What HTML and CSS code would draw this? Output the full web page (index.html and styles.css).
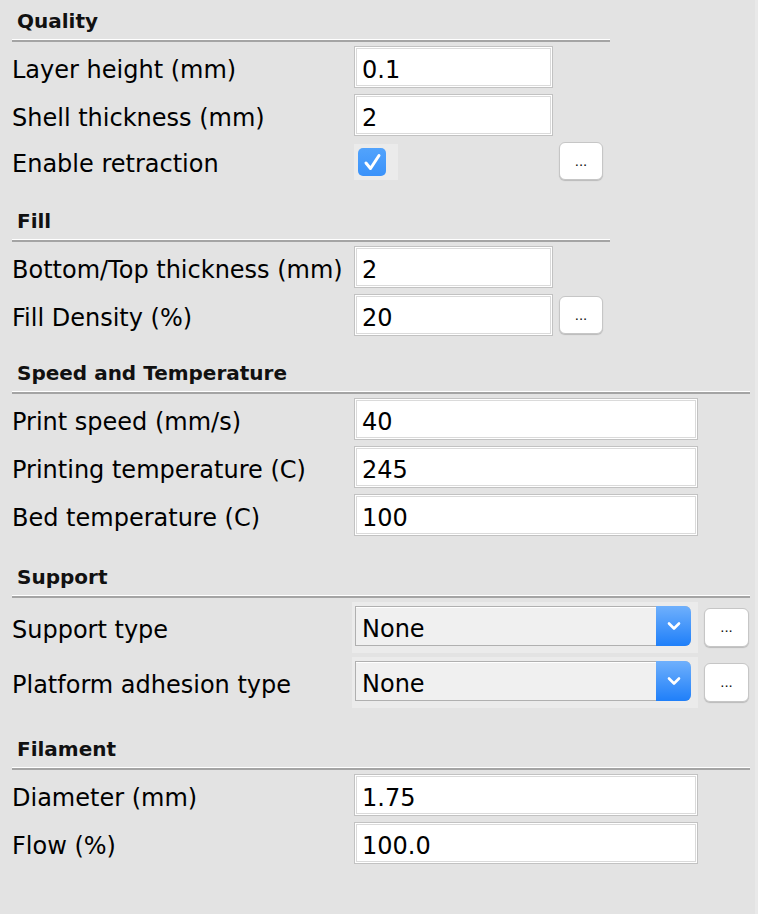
FILE: index.html
```html
<!DOCTYPE html>
<html lang="en">
<head>
    <meta charset="UTF-8">
    <meta name="viewport" content="width=device-width, initial-scale=1.0">
    <title>Basic settings</title>
    <link rel="stylesheet" href="styles.css">
</head>
<body>
    <div class="panel">
        <section class="group narrow">
            <h2 class="group-title">Quality</h2>
            <div class="rows">
                <label class="name">Layer height (mm)</label>
                <input class="field" type="text" value="0.1">
                <label class="name">Shell thickness (mm)</label>
                <input class="field" type="text" value="2">
                <label class="name">Enable retraction</label>
                <div class="check-cell">
                    <span class="check">
                        <svg viewBox="0 0 28 28" width="28" height="28"><path d="M8 15 L12.5 20.5 L21 7.5" fill="none" stroke="#fff" stroke-width="3" stroke-linecap="round" stroke-linejoin="round"/></svg>
                    </span>
                </div>
                <button class="more">...</button>
            </div>
        </section>

        <section class="group narrow">
            <h2 class="group-title">Fill</h2>
            <div class="rows">
                <label class="name">Bottom/Top thickness (mm)</label>
                <input class="field" type="text" value="2">
                <label class="name">Fill Density (%)</label>
                <input class="field" type="text" value="20">
                <button class="more">...</button>
            </div>
        </section>

        <section class="group wide tight">
            <h2 class="group-title">Speed and Temperature</h2>
            <div class="rows">
                <label class="name">Print speed (mm/s)</label>
                <input class="field" type="text" value="40">
                <label class="name">Printing temperature (C)</label>
                <input class="field" type="text" value="245">
                <label class="name">Bed temperature (C)</label>
                <input class="field" type="text" value="100">
            </div>
        </section>

        <section class="group wide">
            <h2 class="group-title">Support</h2>
            <div class="rows compact">
                <label class="name">Support type</label>
                <div class="select-wrap">
                    <div class="select">
                        <span class="select-value">None</span>
                        <span class="select-arrow">
                            <svg viewBox="0 0 16 12" width="16" height="12"><polyline points="3,3.5 8,8.5 13,3.5" fill="none" stroke="#fff" stroke-width="2.6" stroke-linecap="round" stroke-linejoin="round"/></svg>
                        </span>
                    </div>
                </div>
                <button class="more">...</button>
                <label class="name">Platform adhesion type</label>
                <div class="select-wrap">
                    <div class="select">
                        <span class="select-value">None</span>
                        <span class="select-arrow">
                            <svg viewBox="0 0 16 12" width="16" height="12"><polyline points="3,3.5 8,8.5 13,3.5" fill="none" stroke="#fff" stroke-width="2.6" stroke-linecap="round" stroke-linejoin="round"/></svg>
                        </span>
                    </div>
                </div>
                <button class="more">...</button>
            </div>
        </section>

        <section class="group wide">
            <h2 class="group-title">Filament</h2>
            <div class="rows">
                <label class="name">Diameter (mm)</label>
                <input class="field" type="text" value="1.75">
                <label class="name">Flow (%)</label>
                <input class="field" type="text" value="100.0">
            </div>
        </section>
    </div>
</body>
</html>
```

FILE: styles.css
```css
html{
    box-sizing: border-box;
}
*,
*::before,
*::after{
    box-sizing: inherit;
    margin: 0;
    padding: 0;
}
body{
    background: #e3e3e3;
    font-family: "DejaVu Sans", "Liberation Sans", sans-serif;
    color: #000;
}
.panel{
    min-height: 914px;
    padding: 0 0 0 12px;
    box-shadow: inset -3px 0 0 #e9e9e9;
}
.group + .group{
    margin-top: 20px;
}
.group.tight{
    margin-top: 16px;
}
.group-title{
    font-size: 20px;
    font-weight: bold;
    line-height: 24px;
    color: #111;
    padding: 9px 0 7px 5px;
    border-bottom: 2px solid #a4a4a4;
    box-shadow: inset 0 -1px 0 #fff;
}
.narrow .group-title{
    width: 598px;
}
.wide .group-title{
    width: 738px;
}
.rows{
    display: grid;
    grid-template-columns: 336px 199px auto;
    column-gap: 6px;
    row-gap: 6px;
    align-items: center;
    margin-top: 4px;
}
.wide .rows{
    grid-template-columns: 336px 344px auto;
}
.rows.compact{
    row-gap: 4px;
}
.name{
    grid-column: 1;
    font-size: 24px;
    padding-top: 5px;
    white-space: nowrap;
}
.field{
    grid-column: 2;
    width: 100%;
    height: 42px;
    font-family: inherit;
    font-size: 24px;
    color: #000;
    padding: 6px 0 0 7px;
    background: #fff;
    border: 1px solid #c2c2c2;
    box-shadow: inset 0 0 0 1px #fff, inset 0 0 0 2px #dadada;
    outline: none;
}
.check-cell{
    grid-column: 2;
    justify-self: start;
    width: 44px;
    height: 36px;
    margin-top: 2px;
    background: #ebebeb;
    padding: 4px;
}
.check{
    display: block;
    width: 28px;
    height: 28px;
    border-radius: 5px;
    background: linear-gradient(#52a3fc, #3a92fa);
}
.check svg{
    display: block;
}
.more{
    grid-column: 3;
    width: 44px;
    height: 38px;
    background: #fff;
    border: 1px solid #c6c6c6;
    border-radius: 6px;
    box-shadow: 0 1px 1px rgba(0, 0, 0, 0.18);
    font-family: "Liberation Sans", sans-serif;
    font-size: 15px;
    color: #111;
    padding-bottom: 2px;
}
.compact .more{
    width: 45px;
    height: 39px;
}
.select-wrap{
    grid-column: 2;
    margin-left: -2px;
    width: 346px;
    height: 51px;
    background: #ebebeb;
    padding: 4px 7px 7px 3px;
}
.select{
    display: flex;
    height: 40px;
    background: #f0f0f0;
    border: 1px solid #b0b0b0;
    border-right: none;
    border-radius: 0 6px 6px 0;
    box-shadow: inset 0 1px 0 #fff;
}
.select-value{
    flex: 1;
    font-size: 24px;
    line-height: 38px;
    padding: 3px 0 0 6px;
}
.select-arrow{
    width: 35px;
    margin: -1px 0;
    display: flex;
    align-items: center;
    justify-content: center;
    border-radius: 0 6px 6px 0;
    background: linear-gradient(#6fb0fc, #1f7ff9);
}
.select-arrow svg{
    display: block;
}
```
